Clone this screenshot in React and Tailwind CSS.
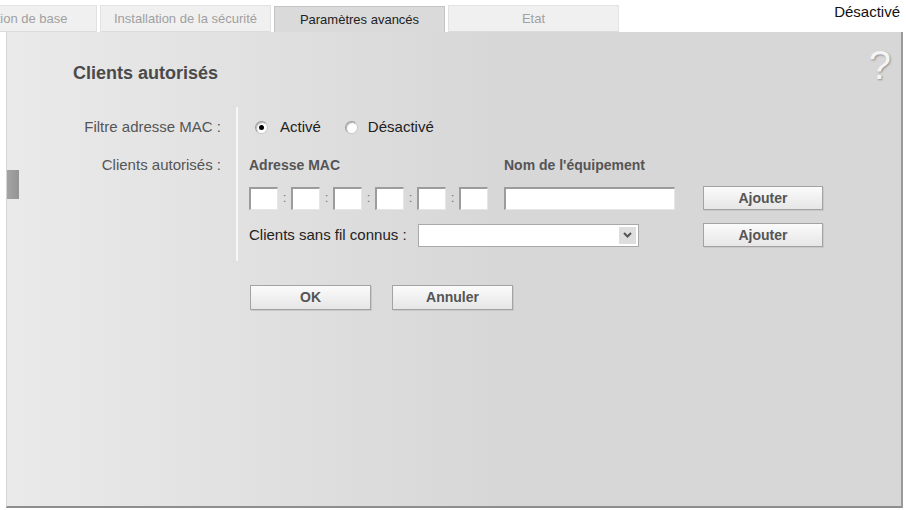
import React from "react";

const tabs = [
  { label: "Installation de base", active: false },
  { label: "Installation de la sécurité", active: false },
  { label: "Paramètres avancés", active: true },
  { label: "Etat", active: false },
];

function Radio({ checked }) {
  return (
    <span className="w-[13px] h-[13px] rounded-full bg-white border border-[#c8c8c8] border-t-[#9a9a9a] border-l-[#9a9a9a] shadow-[inset_1px_1px_1px_#b5b5b5] flex items-center justify-center">
      {checked && <span className="w-[5px] h-[5px] rounded-full bg-black"></span>}
    </span>
  );
}

function Field({ className }) {
  return (
    <span
      className={`block bg-white border-t-2 border-l-2 border-b border-r border-t-[#9c9c9c] border-l-[#9c9c9c] border-b-[#e6e6e6] border-r-[#e6e6e6] ${className}`}
    ></span>
  );
}

function Button({ children, className = "" }) {
  return (
    <button
      className={`flex items-center justify-center border border-[#a3a3a3] bg-[linear-gradient(to_bottom,#fbfbfb,#e6e6e6)] text-[14px] font-bold text-[#555] shadow-[1px_1px_0_#c8c8c8] ${className}`}
    >
      {children}
    </button>
  );
}

export default function App() {
  return (
    <div
      className="w-[906px] h-[510px] bg-white overflow-hidden"
      style={{ fontFamily: '"Liberation Sans", Arial, sans-serif' }}
    >
      <div className="flex items-start h-[32px]">
        <div className="flex items-end gap-[3px] ml-[-74px] h-[32px]">
          {tabs.map((tab) =>
            tab.active ? (
              <div
                key={tab.label}
                className="w-[171px] h-[26px] flex items-center justify-center text-[13px] text-[#222] bg-[#dadada] border-t border-x border-[#c4c4c4]"
              >
                {tab.label}
              </div>
            ) : (
              <div
                key={tab.label}
                className="w-[171px] h-[27px] flex items-center justify-center text-[13px] text-[#a0a0a0] bg-[#f0f0f0] border-t border-x border-[#e2e2e2] border-b border-b-[#dcdcdc]"
              >
                {tab.label}
              </div>
            )
          )}
        </div>
        <div className="ml-auto mr-[6px] mt-[3px] text-[15px] leading-[17px] text-[#111]">
          Désactivé
        </div>
      </div>

      <div className="relative ml-[6px] w-[897px] h-[476px] border-l border-l-[#d4d4d4] border-r-2 border-r-[#9a9a9a] border-b-2 border-b-[#8e8e8e] bg-[linear-gradient(to_right,#eaeaea,#d7d7d7_55%)]">
        <span className="absolute left-0 top-[138px] w-[12px] h-[29px] bg-[linear-gradient(to_right,#a4a4a4,#949494)]"></span>

        <div className="flex justify-between items-start h-[53px]">
          <h1 className="ml-[66px] mt-[29px] text-[18px] leading-[24px] font-bold text-[#4a4a4a]">
            Clients autorisés
          </h1>
          <span className="mr-[10px] mt-[12px] text-[40px] leading-[42px] text-[#f4f4f4] [text-shadow:1px_1px_2px_#8f8f8f]">
            ?
          </span>
        </div>

        <div className="flex mt-[22px]">
          <div className="w-[229px] pr-[15px] flex flex-col items-end text-[15px] text-[#555]">
            <div className="h-[40px] flex items-center">Filtre adresse MAC :</div>
            <div className="h-[36px] flex items-center">Clients autorisés :</div>
          </div>

          <div className="border-l-2 border-l-[#f7f7f7] pl-[11px] pb-[14px] text-[15px] text-[#222]">
            <div className="h-[40px] flex items-center pl-[6px]">
              <Radio checked />
              <span className="ml-[12px]">Activé</span>
              <span className="ml-[24px]">
                <Radio />
              </span>
              <span className="ml-[10px]">Désactivé</span>
            </div>

            <div className="h-[36px] flex items-center text-[14px] font-bold text-[#555]">
              <span className="w-[255px]">Adresse MAC</span>
              <span>Nom de l'équipement</span>
            </div>

            <div className="mt-[3px] flex items-center h-[24px]">
              {[0, 1, 2, 3, 4, 5].map((i) => (
                <React.Fragment key={i}>
                  <Field className="w-[29px] h-[23px]" />
                  {i < 5 && (
                    <span className="w-[13px] text-center text-[13px] text-[#777]">:</span>
                  )}
                </React.Fragment>
              ))}
              <Field className="ml-[16px] w-[171px] h-[23px]" />
              <Button className="ml-[28px] w-[120px] h-[24px]">Ajouter</Button>
            </div>

            <div className="mt-[13px] flex items-center h-[24px]">
              <span className="w-[169px]">Clients sans fil connus :</span>
              <span className="w-[221px] h-[23px] bg-white border border-[#a9a9a9] flex items-center justify-end pr-[2px]">
                <span className="w-[17px] h-[17px] bg-[#dedede] flex items-center justify-center">
                  <svg width="9" height="6" viewBox="0 0 9 6">
                    <path d="M1 1l3.5 3.5L8 1" fill="none" stroke="#555" strokeWidth="2" />
                  </svg>
                </span>
              </span>
              <Button className="ml-[64px] w-[120px] h-[24px]">Ajouter</Button>
            </div>
          </div>
        </div>

        <div className="flex gap-[21px] ml-[243px] mt-[24px]">
          <Button className="w-[121px] h-[25px]">OK</Button>
          <Button className="w-[121px] h-[25px]">Annuler</Button>
        </div>
      </div>
    </div>
  );
}
